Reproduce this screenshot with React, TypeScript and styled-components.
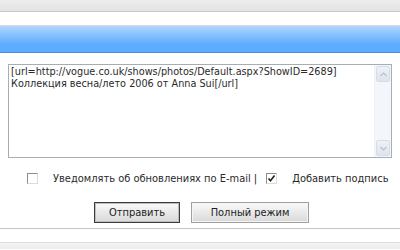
import React from 'react'
import styled, { createGlobalStyle } from 'styled-components'

const GlobalStyle = createGlobalStyle`
  html, body {
    margin: 0;
    padding: 0;
    background: #ffffff;
  }
`

const Page = styled.div`
  width: 400px;
  height: 250px;
  overflow: hidden;
  background: #ffffff;
  font-family: 'DejaVu Sans', Verdana, sans-serif;
  color: #222;
`

// Полоса сверху
const TopBand = styled.div`
  height: 11px;
  background: linear-gradient(#ededed, #e3e3e3);
  border-bottom: 1px solid #c9c9c9;
`

const Gap = styled.div<{ $h: number }>`
  height: ${p => p.$h}px;
`

const BlueBar = styled.div`
  height: 26px;
  border-top: 1px solid #d9d9d9;
  border-bottom: 1px solid #4a8fd8;
  background: linear-gradient(#b3d7ff 0%, #86c0ff 35%, #5eaeff 70%, #5aacff 100%);
`

const Content = styled.div`
  padding: 11px 8px 0;
`

const Editor = styled.div`
  display: flex;
  height: 92px;
  border: 1px solid #a7adb5;
`

const EditorText = styled.div`
  flex: 1;
  padding: 1px 2px;
  font-size: 9.7px;
  line-height: 12px;
  color: #2a2a2a;
  white-space: pre;
`

const Scrollbar = styled.div`
  width: 14px;
  display: flex;
  flex-direction: column;
  justify-content: space-between;
  background: #f3f6fb;
  border-left: 1px solid #eef1f6;
  padding: 1px;
`

const ScrollButton = styled.div`
  height: 14px;
  display: flex;
  align-items: center;
  justify-content: center;
  background: linear-gradient(#eef2f7, #dde4ec);
  border: 1px solid #d6dde6;
  border-radius: 2px;
`

const Options = styled.div`
  display: flex;
  align-items: center;
  margin: 15px 0 0 19px;
  font-size: 9.9px;
  color: #2a2a2a;
`

const Box = styled.span`
  width: 9px;
  height: 9px;
  display: inline-flex;
  align-items: center;
  justify-content: center;
  border: 1px solid #8c8c8c;
  border-right-color: #dcdcdc;
  border-bottom-color: #dcdcdc;
  background: #fff;
`

const Label = styled.span<{ $ml: number }>`
  margin-left: ${p => p.$ml}px;
`

const Buttons = styled.div`
  display: flex;
  justify-content: center;
  gap: 11px;
  margin-top: 18px;
  padding-left: 3px;
`

const Button = styled.button<{ $w: number; $focus?: boolean }>`
  width: ${p => p.$w}px;
  height: 21px;
  padding: 0;
  font-family: 'DejaVu Sans', Verdana, sans-serif;
  font-size: 9.9px;
  color: #222;
  background: linear-gradient(#fafafa, #e6e6e6 60%, #d9d9d9);
  border: 1px solid ${p => (p.$focus ? '#3c3c3c' : '#a0a0a0')};
  box-shadow: ${p => (p.$focus ? 'inset 0 0 0 1px #bdbdbd' : 'inset 0 0 0 1px #f4f4f4')};
`

const Rule = styled.div<{ $mt: number; $c: string }>`
  margin-top: ${p => p.$mt}px;
  height: 1px;
  background: ${p => p.$c};
`

const BottomBand = styled.div`
  height: 6px;
  background: linear-gradient(#f4f4f4, #ececec);
`

const ArrowUp = () => (
  <svg width="7" height="5" viewBox="0 0 7 5">
    <path d="M0.5 4 L3.5 1 L6.5 4" fill="none" stroke="#b7c0cc" strokeWidth="1.2" />
  </svg>
)

const ArrowDown = () => (
  <svg width="7" height="5" viewBox="0 0 7 5">
    <path d="M0.5 1 L3.5 4 L6.5 1" fill="none" stroke="#b7c0cc" strokeWidth="1.2" />
  </svg>
)

const Check = () => (
  <svg width="9" height="9" viewBox="0 0 9 9">
    <path d="M1.5 4.5 L3.5 6.8 L7.5 1.5" fill="none" stroke="#222" strokeWidth="1.6" />
  </svg>
)

const App: React.FC = () => {
  return (
    <Page>
      <GlobalStyle />
      <TopBand />
      <Gap $h={13} />
      <BlueBar />
      <Content>
        <Editor>
          <EditorText>
            {'[url=http://vogue.co.uk/shows/photos/Default.aspx?ShowID=2689]\nКоллекция весна/лето 2006 от Anna Sui[/url]'}
          </EditorText>
          <Scrollbar>
            <ScrollButton><ArrowUp /></ScrollButton>
            <ScrollButton><ArrowDown /></ScrollButton>
          </Scrollbar>
        </Editor>
        <Options>
          <Box />
          <Label $ml={15}>Уведомлять об обновлениях по E-mail |</Label>
          <Box style={{ marginLeft: 9 }}><Check /></Box>
          <Label $ml={15}>Добавить подпись</Label>
        </Options>
        <Buttons>
          <Button $w={86} $focus>Отправить</Button>
          <Button $w={118}>Полный режим</Button>
        </Buttons>
      </Content>
      <Rule $mt={5} $c="#c4c4c4" />
      <Gap $h={13} />
      <Rule $mt={0} $c="#dedede" />
      <BottomBand />
    </Page>
  )
}

export default App
